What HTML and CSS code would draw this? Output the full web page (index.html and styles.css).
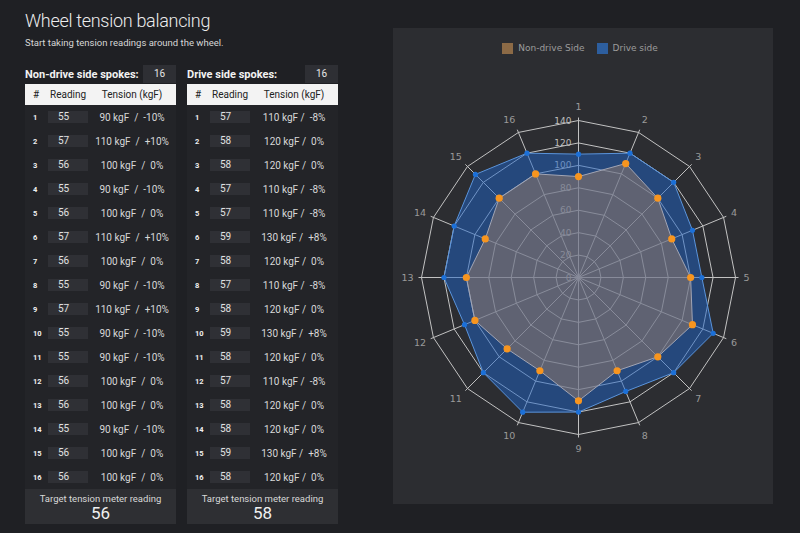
FILE: index.html
```html
<!DOCTYPE html>
<html lang="en">
<head>
<meta charset="utf-8">
<title>Wheel tension balancing</title>
<link rel="stylesheet" href="styles.css">
</head>
<body>
<div class="page">
  <div class="left">
    <h1 class="title">Wheel tension balancing</h1>
    <p class="subtitle">Start taking tension readings around the wheel.</p>
    <div class="sides">
      <section class="side">
        <div class="side-head"><span class="side-label">Non-drive side spokes:</span><span class="count">16</span></div>
        <div class="thead"><span class="c-num">#</span><span class="c-read">Reading</span><span class="c-ten">Tension (kgF)</span></div>
        <div class="tbody">
          <div class="row"><span class="c-num">1</span><span class="c-read"><span class="reading">55</span></span><span class="c-ten">90 kgF  /  -10%</span></div>
          <div class="row"><span class="c-num">2</span><span class="c-read"><span class="reading">57</span></span><span class="c-ten">110 kgF  /  +10%</span></div>
          <div class="row"><span class="c-num">3</span><span class="c-read"><span class="reading">56</span></span><span class="c-ten">100 kgF  /  0%</span></div>
          <div class="row"><span class="c-num">4</span><span class="c-read"><span class="reading">55</span></span><span class="c-ten">90 kgF  /  -10%</span></div>
          <div class="row"><span class="c-num">5</span><span class="c-read"><span class="reading">56</span></span><span class="c-ten">100 kgF  /  0%</span></div>
          <div class="row"><span class="c-num">6</span><span class="c-read"><span class="reading">57</span></span><span class="c-ten">110 kgF  /  +10%</span></div>
          <div class="row"><span class="c-num">7</span><span class="c-read"><span class="reading">56</span></span><span class="c-ten">100 kgF  /  0%</span></div>
          <div class="row"><span class="c-num">8</span><span class="c-read"><span class="reading">55</span></span><span class="c-ten">90 kgF  /  -10%</span></div>
          <div class="row"><span class="c-num">9</span><span class="c-read"><span class="reading">57</span></span><span class="c-ten">110 kgF  /  +10%</span></div>
          <div class="row"><span class="c-num">10</span><span class="c-read"><span class="reading">55</span></span><span class="c-ten">90 kgF  /  -10%</span></div>
          <div class="row"><span class="c-num">11</span><span class="c-read"><span class="reading">55</span></span><span class="c-ten">90 kgF  /  -10%</span></div>
          <div class="row"><span class="c-num">12</span><span class="c-read"><span class="reading">56</span></span><span class="c-ten">100 kgF  /  0%</span></div>
          <div class="row"><span class="c-num">13</span><span class="c-read"><span class="reading">56</span></span><span class="c-ten">100 kgF  /  0%</span></div>
          <div class="row"><span class="c-num">14</span><span class="c-read"><span class="reading">55</span></span><span class="c-ten">90 kgF  /  -10%</span></div>
          <div class="row"><span class="c-num">15</span><span class="c-read"><span class="reading">56</span></span><span class="c-ten">100 kgF  /  0%</span></div>
          <div class="row"><span class="c-num">16</span><span class="c-read"><span class="reading">56</span></span><span class="c-ten">100 kgF  /  0%</span></div>
        </div>
        <div class="target"><div class="target-label">Target tension meter reading</div><div class="target-value">56</div></div>
      </section>
      <section class="side">
        <div class="side-head"><span class="side-label">Drive side spokes:</span><span class="count">16</span></div>
        <div class="thead"><span class="c-num">#</span><span class="c-read">Reading</span><span class="c-ten">Tension (kgF)</span></div>
        <div class="tbody">
          <div class="row"><span class="c-num">1</span><span class="c-read"><span class="reading">57</span></span><span class="c-ten">110 kgF /  -8%</span></div>
          <div class="row"><span class="c-num">2</span><span class="c-read"><span class="reading">58</span></span><span class="c-ten">120 kgF /  0%</span></div>
          <div class="row"><span class="c-num">3</span><span class="c-read"><span class="reading">58</span></span><span class="c-ten">120 kgF /  0%</span></div>
          <div class="row"><span class="c-num">4</span><span class="c-read"><span class="reading">57</span></span><span class="c-ten">110 kgF /  -8%</span></div>
          <div class="row"><span class="c-num">5</span><span class="c-read"><span class="reading">57</span></span><span class="c-ten">110 kgF /  -8%</span></div>
          <div class="row"><span class="c-num">6</span><span class="c-read"><span class="reading">59</span></span><span class="c-ten">130 kgF /  +8%</span></div>
          <div class="row"><span class="c-num">7</span><span class="c-read"><span class="reading">58</span></span><span class="c-ten">120 kgF /  0%</span></div>
          <div class="row"><span class="c-num">8</span><span class="c-read"><span class="reading">57</span></span><span class="c-ten">110 kgF /  -8%</span></div>
          <div class="row"><span class="c-num">9</span><span class="c-read"><span class="reading">58</span></span><span class="c-ten">120 kgF /  0%</span></div>
          <div class="row"><span class="c-num">10</span><span class="c-read"><span class="reading">59</span></span><span class="c-ten">130 kgF /  +8%</span></div>
          <div class="row"><span class="c-num">11</span><span class="c-read"><span class="reading">58</span></span><span class="c-ten">120 kgF /  0%</span></div>
          <div class="row"><span class="c-num">12</span><span class="c-read"><span class="reading">57</span></span><span class="c-ten">110 kgF /  -8%</span></div>
          <div class="row"><span class="c-num">13</span><span class="c-read"><span class="reading">58</span></span><span class="c-ten">120 kgF /  0%</span></div>
          <div class="row"><span class="c-num">14</span><span class="c-read"><span class="reading">58</span></span><span class="c-ten">120 kgF /  0%</span></div>
          <div class="row"><span class="c-num">15</span><span class="c-read"><span class="reading">59</span></span><span class="c-ten">130 kgF /  +8%</span></div>
          <div class="row"><span class="c-num">16</span><span class="c-read"><span class="reading">58</span></span><span class="c-ten">120 kgF /  0%</span></div>
        </div>
        <div class="target"><div class="target-label">Target tension meter reading</div><div class="target-value">58</div></div>
      </section>
    </div>
  </div>
  <div class="chart-panel">
    <div class="legend">
      <span class="legend-box legend-nd"></span><span class="legend-text">Non-drive Side</span>
      <span class="legend-box legend-dr"></span><span class="legend-text">Drive side</span>
    </div>
    <svg id="radar" class="radar" width="380" height="444" viewBox="0 0 380 444" xmlns="http://www.w3.org/2000/svg"></svg>
  </div>
</div>
<script src="script.js"></script>
</body>
</html>
```

FILE: styles.css
```css
* { box-sizing: border-box; }
html, body { margin: 0; padding: 0; }
body {
  background: #1f2024;
  font-family: Roboto, "Liberation Sans", sans-serif;
  color: #dcdcdc;
  width: 800px;
  height: 533px;
  overflow: hidden;
}
.page {
  display: flex;
  align-items: flex-start;
  padding-left: 25px;
}
.left { width: 313px; }
.title {
  margin: 9px 0 0;
  font-size: 18px;
  line-height: 24px;
  font-weight: 300;
  letter-spacing: -0.3px;
  color: #ececec;
}
.subtitle {
  margin: 3px 0 0;
  font-size: 9.5px;
  line-height: 14px;
  color: #d6d6d6;
}
.sides {
  display: flex;
  gap: 11px;
  margin-top: 15px;
}
.side { width: 151px; }
.side-head {
  display: flex;
  justify-content: space-between;
  align-items: center;
  height: 18px;
}
.side-label {
  font-size: 11px;
  font-weight: 700;
  color: #f2f2f2;
}
.count {
  width: 33px;
  height: 18px;
  background: #2e2f34;
  font-size: 10px;
  line-height: 18px;
  text-align: center;
  color: #e6e6e6;
}
.thead, .row {
  display: grid;
  grid-template-columns: 23px 40px 88px;
  align-items: center;
}
.thead {
  margin-top: 1px;
  height: 21px;
  background: #f3f3f3;
  color: #222;
  font-size: 10px;
}
.thead .c-num { padding-left: 8px; }
.thead .c-read { padding-left: 2px; }
.c-ten { text-align: center; white-space: pre; }
.tbody { background: #232428; }
.row {
  height: 24px;
  font-size: 10px;
  color: #d8d8d8;
}
.row .c-num {
  padding-left: 8px;
  font-size: 7.5px;
  font-weight: 700;
  color: #f0f0f0;
}
.reading {
  display: block;
  height: 12px;
  background: #2f3035;
  padding-left: 10px;
  line-height: 12px;
  font-size: 10px;
  color: #e0e0e0;
}
.target {
  height: 35px;
  background: #2e2f33;
  text-align: center;
  padding-top: 3px;
}
.target-label {
  font-size: 9.5px;
  line-height: 13px;
  color: #d8d8d8;
}
.target-value {
  font-size: 17px;
  line-height: 17px;
  color: #f0f0f0;
}
.chart-panel {
  margin-left: 55px;
  margin-top: 28px;
  width: 380px;
  height: 476px;
  background: #2c2d31;
}
.legend {
  display: flex;
  justify-content: center;
  align-items: center;
  height: 12px;
  margin-top: 14px;
  padding-right: 6px;
  font-family: "DejaVu Sans", sans-serif;
  font-size: 9px;
  color: #9c9c9c;
}
.legend-box {
  width: 11px;
  height: 11px;
  margin-right: 5px;
}
.legend-nd { background: #8c6a46; }
.legend-dr { background: #2d5e9e; margin-left: 12px; }
.radar {
  display: block;
  margin-top: 6px;
  font-family: "DejaVu Sans", sans-serif;
}
```

FILE: script.js
```js
(function () {
  var NS = "http://www.w3.org/2000/svg";
  var svg = document.getElementById("radar");
  var cx = 185.5, cy = 217.5, R = 157, max = 140, n = 16;
  var nd = [90,110,100,90,100,110,100,90,110,90,90,100,100,90,100,100];
  var dr = [110,120,120,110,110,130,120,110,120,130,120,110,120,120,130,120];

  function pt(i, r) {
    var a = i * Math.PI * 2 / n;
    return [cx + r * Math.sin(a), cy - r * Math.cos(a)];
  }
  function el(name, attrs, text) {
    var e = document.createElementNS(NS, name);
    for (var k in attrs) e.setAttribute(k, attrs[k]);
    if (text !== undefined) e.textContent = text;
    svg.appendChild(e);
    return e;
  }
  function poly(values) {
    return values.map(function (v, i) {
      var p = pt(i, v / max * R);
      return p[0].toFixed(2) + "," + p[1].toFixed(2);
    }).join(" ");
  }

  for (var k = 1; k <= 7; k++) {
    var ring = [];
    for (var i = 0; i < n; i++) ring.push(k * 20);
    el("polygon", { points: poly(ring), fill: "none", stroke: "#c2c2c2", "stroke-width": 1 });
  }
  for (var i = 0; i < n; i++) {
    var p = pt(i, R + 3);
    el("line", { x1: cx, y1: cy, x2: p[0].toFixed(2), y2: p[1].toFixed(2), stroke: "#c2c2c2", "stroke-width": 1 });
  }
  for (var k = 0; k <= 7; k++) {
    el("text", { x: cx - 7, y: cy - k * R / 7, "text-anchor": "end", "dominant-baseline": "central",
      "font-size": 9, fill: "#bdbdbd" }, String(k * 20));
  }
  for (var i = 0; i < n; i++) {
    var a = i * Math.PI * 2 / n;
    var s = Math.sin(a), c = Math.cos(a);
    var p = pt(i, R + 8);
    var anchor = s > 0.01 ? "start" : (s < -0.01 ? "end" : "middle");
    el("text", { x: p[0].toFixed(2), y: (p[1] - c * 6).toFixed(2), "text-anchor": anchor,
      "dominant-baseline": "central", "font-size": 9.5, fill: "#9a9a9a" }, String(i + 1));
  }
  el("polygon", { points: poly(dr), fill: "rgba(30,100,200,0.5)", stroke: "#5a94dc", "stroke-width": 1 });
  el("polygon", { points: poly(nd), fill: "rgba(166,130,102,0.45)", stroke: "#a2a5b4", "stroke-width": 1 });
  dr.forEach(function (v, i) {
    var p = pt(i, v / max * R);
    el("circle", { cx: p[0].toFixed(2), cy: p[1].toFixed(2), r: 2.6, fill: "#1c70d8" });
  });
  nd.forEach(function (v, i) {
    var p = pt(i, v / max * R);
    el("circle", { cx: p[0].toFixed(2), cy: p[1].toFixed(2), r: 3.6, fill: "#f7951f" });
  });
})();
```
